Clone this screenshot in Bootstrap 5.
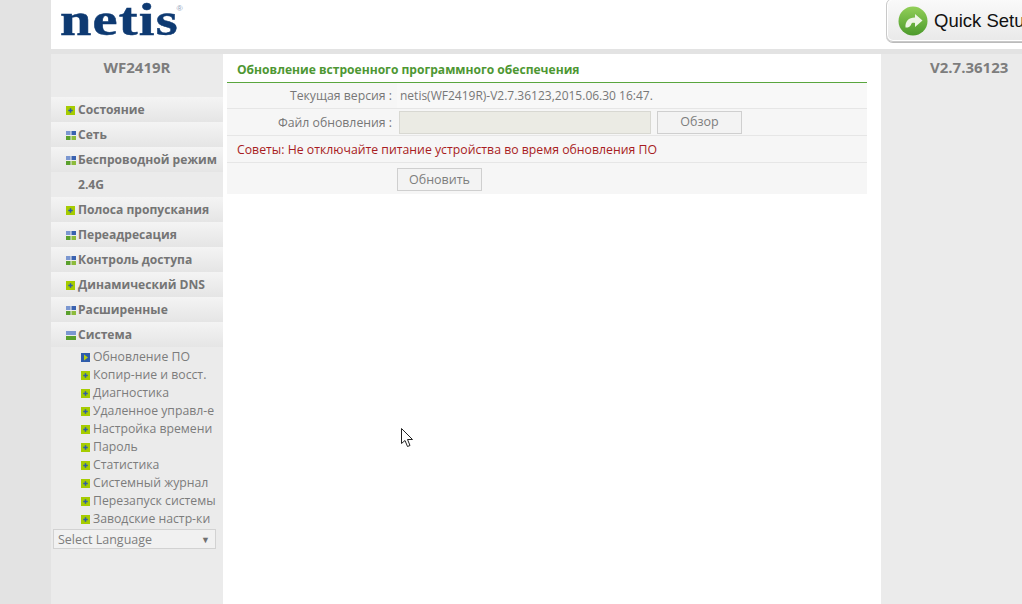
<!DOCTYPE html>
<html lang="ru">
<head>
<meta charset="utf-8">
<title>netis</title>
<link rel="stylesheet" href="https://cdn.jsdelivr.net/npm/bootstrap@5.3.0/dist/css/bootstrap.min.css">
<style>
html,body{height:604px;overflow:hidden}
body{background:#e3e3e3;padding-left:51px;font-family:"Open Sans","Noto Sans",sans-serif;font-size:12px;color:#777}
.top-strip{height:49px;background:#fff;overflow:hidden;position:relative}
.brand-word{font-family:"Liberation Serif",serif;font-weight:700;font-size:47px;line-height:38px;height:40px;color:#0e3a72;letter-spacing:1px;margin-left:9px;white-space:nowrap;transform:scaleX(1.2);transform-origin:left top;-webkit-text-stroke:.5px #0e3a72}
.brand-word sup{font-family:"Liberation Sans",sans-serif;font-size:7px;font-weight:400;color:#8fa3bd;top:-24px;letter-spacing:0;left:-2px;vertical-align:baseline;position:relative;-webkit-text-stroke:0}
.quick-btn{flex:none;width:160px;height:44px;margin-left:auto;margin-right:-24px;margin-top:-2px;border:1px solid #c9c9c9;border-radius:7px;background:linear-gradient(#fafafa,#e9e9e9);box-shadow:0 1px 0 #bbb,inset 0 0 0 1px #fff;color:#111;font-family:"Liberation Sans",sans-serif;font-size:18.5px;white-space:nowrap;overflow:hidden;gap:6px;padding-left:11px;padding-top:2px}
.gap-strip{height:5px;background:#e3e3e3}
.panes{height:550px}
.side-pane{width:172px;background:#ebebeb;flex:none;overflow:hidden}
.main-pane{width:658px;background:#fff;flex:none;padding:0 14px 0 4px}
.right-pane{background:#ebebeb;flex:1 1 auto}
.model-name{font-weight:700;font-size:15px;color:#7d7d7d;text-align:center;line-height:24px;height:43px;padding-top:1px}
.version-name{font-weight:700;font-size:15px;color:#7d7d7d;line-height:24px;padding-top:1px;padding-left:49px;white-space:nowrap}
.menu-row{height:25px;padding-left:15px;padding-top:2px;background:linear-gradient(#f4f4f4,#e5e5e5);font-weight:700;font-size:12.1px;color:#757575;gap:2px;white-space:nowrap}
.menu-plain{height:25px;padding-left:27px;padding-top:2px;font-weight:700;font-size:12.1px;color:#757575}
.sub-row{height:18px;padding-left:30px;padding-top:2px;font-size:12.25px;color:#7c7c7c;gap:3px;white-space:nowrap}
.lang-box{margin:2px 7px 0 2px;height:20px;border:1px solid #d2d2d2;background:#f1f1f1;font-size:12.5px;color:#7d7d7d;padding:2px 4px 0;justify-content:space-between}
.lang-arrow{font-size:9px;color:#707070;padding-right:1px}
.ico{flex:none;display:block}
.plus-ico{margin-right:1px}
.pane-title{height:29px;color:#4e9733;font-weight:700;font-size:12.07px;line-height:31px;padding-left:10px;border-bottom:1px solid #5aa63e}
.form-line{background:#f6f6f6;border-bottom:1px solid #e6e6e6;height:27px}
.first-line{height:26px}
.line-label{width:170px;flex:none;text-align:right;padding-right:5px;font-size:12.25px}
.label-low{padding-top:2px}
.line-value{padding-left:3px;background:#f8f8f8;align-self:stretch;flex:1 1 auto}
.file-field{width:252px;height:23px;background:#ebebe4;border:1px solid #d8d8d2;margin-left:2px;flex:none}
.plain-btn{height:23px;border:1px solid #cfcfcf;border-radius:0;background:#f3f3f3;color:#7d7d7d;font-size:12.5px;padding:0;line-height:20px}
.browse-btn{width:85px;margin-left:6px}
.do-btn{width:85px;margin-left:170px}
.warn-text{color:#a81c22;padding-left:10px;font-size:12.28px;padding-top:2px}
.last-line{background:#f6f6f6;height:31px;padding-top:5px}
.pointer-mark{position:absolute;left:401px;top:428px}
</style>
</head>
<body>
<svg class="d-none"><defs>
<symbol id="plus-mark" viewBox="0 0 9 9"><rect width="9" height="9" fill="#a6cc00"/><path d="M3.750 2.250h1.500v1.500h1.500v1.500h-1.500v1.500h-1.500v-1.500h-1.500v-1.500h1.500z" fill="#2f5cab"/></symbol>
<symbol id="grid-mark" viewBox="0 0 10 9"><rect width="4.500" height="4" fill="#7b97d0"/><rect x="5.500" width="4.500" height="4" fill="#3a62b0"/><rect y="5" width="4.500" height="4" fill="#5aa02c"/><rect x="5.500" y="5" width="4.500" height="4" fill="#8dbb3c"/></symbol>
</defs></svg>
<div class="top-strip d-flex">
  <div class="brand-word">netis<sup>®</sup></div>
  <div class="quick-btn d-flex align-items-center">
    <svg class="ico" width="30" height="30" viewBox="0 0 30 30"><defs><linearGradient id="qg" x1="0" y1="0" x2="0" y2="1"><stop offset="0" stop-color="#92cf58"/><stop offset="1" stop-color="#4c9a2c"/></linearGradient></defs><circle cx="15" cy="15" r="14.5" fill="url(#qg)"/><path d="M7.500 21.500c-.5-6 3-10 9.500-10V8l7.500 6.500-7.500 6.500v-4c-2.500-.5-3.500 0-4 1.800-.8 2.700-4.500 3-5.500 2.700z" fill="#eef5e6"/></svg>
    <span>Quick Setup</span>
  </div>
</div>
<div class="gap-strip"></div>
<div class="panes d-flex">
  <aside class="side-pane">
    <div class="model-name">WF2419R</div>
    <div class="menu-row d-flex align-items-center"><svg class="ico plus-ico" width="9" height="9"><use href="#plus-mark"/></svg><span>Состояние</span></div>
    <div class="menu-row d-flex align-items-center"><svg class="ico" width="10" height="9"><use href="#grid-mark"/></svg><span>Сеть</span></div>
    <div class="menu-row d-flex align-items-center"><svg class="ico" width="10" height="9"><use href="#grid-mark"/></svg><span>Беспроводной режим</span></div>
    <div class="menu-plain d-flex align-items-center">2.4G</div>
    <div class="menu-row d-flex align-items-center"><svg class="ico plus-ico" width="9" height="9"><use href="#plus-mark"/></svg><span>Полоса пропускания</span></div>
    <div class="menu-row d-flex align-items-center"><svg class="ico" width="10" height="9"><use href="#grid-mark"/></svg><span>Переадресация</span></div>
    <div class="menu-row d-flex align-items-center"><svg class="ico" width="10" height="9"><use href="#grid-mark"/></svg><span>Контроль доступа</span></div>
    <div class="menu-row d-flex align-items-center"><svg class="ico plus-ico" width="9" height="9"><use href="#plus-mark"/></svg><span>Динамический DNS</span></div>
    <div class="menu-row d-flex align-items-center"><svg class="ico" width="10" height="9"><use href="#grid-mark"/></svg><span>Расширенные</span></div>
    <div class="menu-row d-flex align-items-center"><svg class="ico" width="10" height="9" viewBox="0 0 10 9"><rect width="10" height="4" fill="#7b97d0"/><rect y="5" width="10" height="4" fill="#5aa02c"/></svg><span>Система</span></div>
    <div class="sub-row d-flex align-items-center"><svg class="ico" width="9" height="9" viewBox="0 0 9 9"><rect width="9" height="9" fill="#2f5cab"/><path d="M3 1.500 7 4.500 3 7.500z" fill="#b5cf10"/></svg><span>Обновление ПО</span></div>
    <div class="sub-row d-flex align-items-center"><svg class="ico" width="9" height="9"><use href="#plus-mark"/></svg><span>Копир-ние и восст.</span></div>
    <div class="sub-row d-flex align-items-center"><svg class="ico" width="9" height="9"><use href="#plus-mark"/></svg><span>Диагностика</span></div>
    <div class="sub-row d-flex align-items-center"><svg class="ico" width="9" height="9"><use href="#plus-mark"/></svg><span>Удаленное управл-е</span></div>
    <div class="sub-row d-flex align-items-center"><svg class="ico" width="9" height="9"><use href="#plus-mark"/></svg><span>Настройка времени</span></div>
    <div class="sub-row d-flex align-items-center"><svg class="ico" width="9" height="9"><use href="#plus-mark"/></svg><span>Пароль</span></div>
    <div class="sub-row d-flex align-items-center"><svg class="ico" width="9" height="9"><use href="#plus-mark"/></svg><span>Статистика</span></div>
    <div class="sub-row d-flex align-items-center"><svg class="ico" width="9" height="9"><use href="#plus-mark"/></svg><span>Системный журнал</span></div>
    <div class="sub-row d-flex align-items-center"><svg class="ico" width="9" height="9"><use href="#plus-mark"/></svg><span>Перезапуск системы</span></div>
    <div class="sub-row d-flex align-items-center"><svg class="ico" width="9" height="9"><use href="#plus-mark"/></svg><span>Заводские настр-ки</span></div>
    <div class="lang-box d-flex align-items-center"><span>Select Language</span><span class="lang-arrow">▼</span></div>
  </aside>
  <main class="main-pane">
    <div class="pane-title">Обновление встроенного программного обеспечения</div>
    <div class="form-line first-line d-flex align-items-center"><div class="line-label label-low">Текущая версия :</div><div class="line-value d-flex align-items-center">netis(WF2419R)-V2.7.36123,2015.06.30 16:47.</div></div>
    <div class="form-line d-flex align-items-center"><div class="line-label label-low">Файл обновления :</div><div class="file-field"></div><button type="button" class="btn plain-btn browse-btn">Обзор</button></div>
    <div class="form-line d-flex align-items-center"><div class="warn-text">Советы: Не отключайте питание устройства во время обновления ПО</div></div>
    <div class="last-line d-flex align-items-start"><button type="button" class="btn plain-btn do-btn">Обновить</button></div>
  </main>
  <aside class="right-pane"><div class="version-name">V2.7.36123</div></aside>
</div>
<svg class="pointer-mark" width="14" height="20" viewBox="0 0 14 20"><path d="M.5.500V15.500L4 12.500 6.500 18.500 9 17.500 6.500 11.500H11.500z" fill="#fff" stroke="#222" stroke-width="1"/></svg>
</body>
</html>
